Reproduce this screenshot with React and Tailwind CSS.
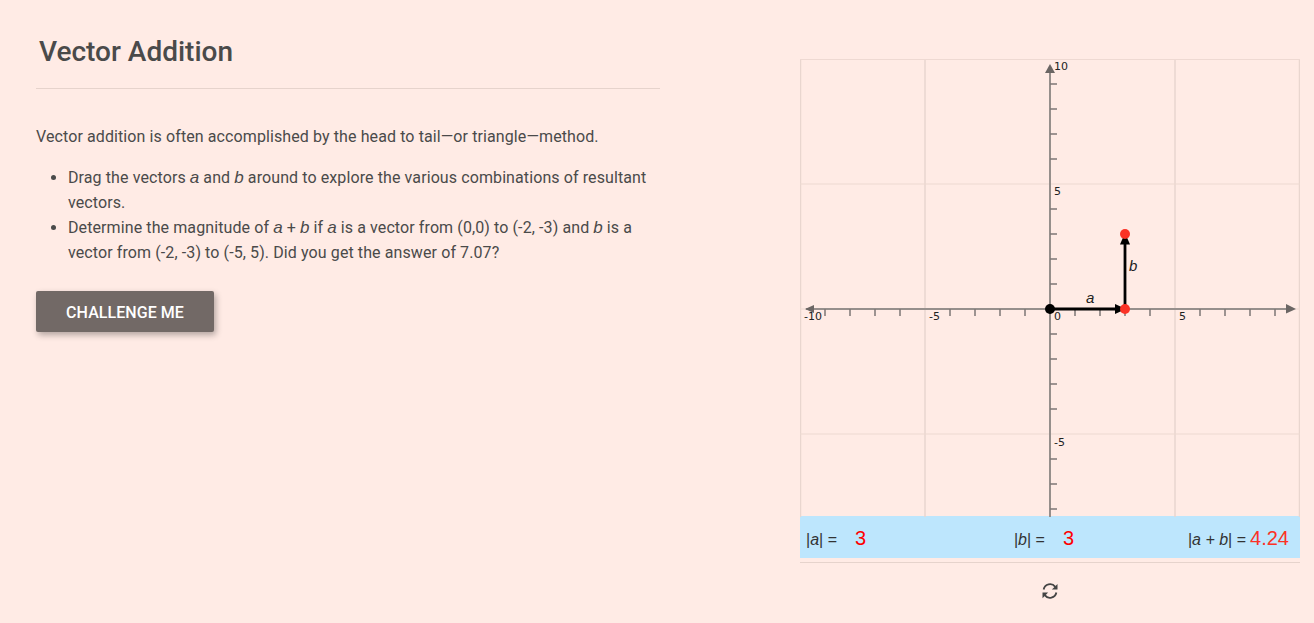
import React from "react";

const range = (a, b) => Array.from({ length: b - a + 1 }, (_, i) => a + i);

function Graph() {
  const ox = 250, oy = 250; // origin inside svg (1050, 309)
  const u = 25;
  return (
    <svg width="500" height="458" viewBox="0 0 500 458" className="block" style={{ fontFamily: '"DejaVu Sans", sans-serif' }}>
      {[0.5, 125, 375, 499.5].map((x) => (
        <line key={x} x1={x} x2={x} y1="0" y2="458" stroke="#e9d6cf" strokeWidth="1.5" />
      ))}
      {[0.5, 125, 250, 375].map((y) => (
        <line key={y} x1="0" x2="500" y1={y} y2={y} stroke="#eed9d2" strokeWidth="1.2" />
      ))}
      <line x1="6" x2="490" y1={oy} y2={oy} stroke="#968f8c" strokeWidth="2" />
      <line x1={ox} x2={ox} y1="8" y2="458" stroke="#968f8c" strokeWidth="2" />
      {range(-9, 9).filter((i) => i !== 0 && i !== -5 && i !== 5).map((i) => (
        <line key={i} x1={ox + i * u} x2={ox + i * u} y1={oy} y2={oy + 7} stroke="#7d7674" strokeWidth="1.5" />
      ))}
      {range(-8, 9).filter((i) => i !== 0 && i !== -5 && i !== 5).map((i) => (
        <line key={i} x1={ox} x2={ox + 7} y1={oy - i * u} y2={oy - i * u} stroke="#7d7674" strokeWidth="1.5" />
      ))}
      <polygon points="245,14 255,14 250,5" fill="#6b6664" />
      <polygon points="5,250 14,246 14,254" fill="#6b6664" />
      <polygon points="496,250 486,245 486,254.5" fill="#6b6664" />
      <g fontSize="11" fill="#222">
        <text x="254" y="11">10</text>
        <text x="254" y="136">5</text>
        <text x="254" y="387">-5</text>
        <text x="254" y="261">0</text>
        <text x="4" y="261">-10</text>
        <text x="129" y="261">-5</text>
        <text x="379" y="261">5</text>
      </g>
      <line x1={ox} x2={318} y1={oy} y2={oy} stroke="#000" strokeWidth="2.8" />
      <polygon points="326,250 315,245 315,255" fill="#000" />
      <line x1={325} x2={325} y1={oy} y2={182} stroke="#000" strokeWidth="2.8" />
      <polygon points="325,174 320,185.5 330,185.5" fill="#000" />
      <circle cx={ox} cy={oy} r="5" fill="#000" />
      <circle cx="325" cy={oy} r="5" fill="#fb3226" />
      <circle cx="325" cy="175" r="5" fill="#fb3226" />
      <g fontSize="15" fill="#222" fontStyle="italic" style={{ fontFamily: '"Liberation Sans", sans-serif' }}>
        <text x="286" y="244">a</text>
        <text x="329" y="212">b</text>
      </g>
    </svg>
  );
}

function Lab({ children, val, valCls }) {
  return (
    <div className="flex items-baseline text-[#333] text-[16px]">
      <span>{children}</span>
      <span className={valCls}>{val}</span>
    </div>
  );
}

function V({ children }) {
  return <i className="font-['Liberation_Sans'] text-[17px] tracking-normal">{children}</i>;
}

export default function App() {
  return (
    <div
      className="flex min-h-[623px] w-full bg-[#ffebe5] text-[#4a4a4a] overflow-hidden"
      style={{ fontFamily: 'Roboto, sans-serif' }}
    >
      <div className="ml-[36px] w-[624px] shrink-0">
        <h1 className="ml-[3px] mt-[34px] text-[28px] leading-[36px] font-medium text-[#4a4a4a]">Vector Addition</h1>
        <div className="mt-[18px] border-b border-[#e6d3cc]" />
        <div className="tracking-[0.1px]">
          <p className="mt-[35px] text-[16px] leading-[25px]">
            Vector addition is often accomplished by the head to tail—or triangle—method.
          </p>
          <ul className="mt-[16px] list-disc pl-[32px] text-[16px] leading-[25px] marker:text-[#4a4a4a]">
            <li>
              Drag the vectors <V>a</V> and <V>b</V> around to explore the various combinations of resultant vectors.
            </li>
            <li>
              Determine the magnitude of <V>a</V> + <V>b</V> if <V>a</V> is a vector from (0,0) to (-2, -3) and <V>b</V> is a vector from (-2, -3) to (-5, 5). Did you get the answer of 7.07?
            </li>
          </ul>
        </div>
        <button className="mt-[26px] flex h-[41px] w-[178px] items-center justify-center rounded-[2px] bg-[#726966] pt-[2px] text-[16px] font-medium tracking-[0.05px] text-white shadow-[2px_3px_6px_rgba(0,0,0,0.3)]">
          CHALLENGE ME
        </button>
      </div>
      <div className="ml-[140px] mt-[59px] w-[500px] shrink-0">
        <Graph />
        <div
          className="-mt-px flex h-[42px] items-center justify-between bg-[#bde6fd] pl-[6px] pr-[11px] pt-[2px]"
          style={{ fontFamily: '"Liberation Sans", sans-serif' }}
        >
          <Lab val="3" valCls="ml-[18px] text-[20px] text-[#ff0000]">|<i>a</i>| =</Lab>
          <div className="ml-[34px]"><Lab val="3" valCls="ml-[18px] text-[20px] text-[#ff0000]">|<i>b</i>| =</Lab></div>
          <Lab val="4.24" valCls="ml-[4px] text-[20px] text-[#fb3226]">|<i>a + b</i>| =</Lab>
        </div>
        <div className="mt-[4px] border-b border-[#e6d3cc]" />
        <div className="mt-[19px] flex justify-center">
          <svg width="18" height="18" viewBox="0 0 24 24" fill="none" stroke="#444" strokeWidth="2.4">
            <path d="M3.5 10a8.7 8.7 0 0 1 15.5-3.5" />
            <path d="M20.5 14a8.7 8.7 0 0 1-15.5 3.5" />
            <polygon points="22,2.5 22,10 14.5,10" fill="#444" stroke="none" />
            <polygon points="2,21.5 2,14 9.5,14" fill="#444" stroke="none" />
          </svg>
        </div>
      </div>
    </div>
  );
}
